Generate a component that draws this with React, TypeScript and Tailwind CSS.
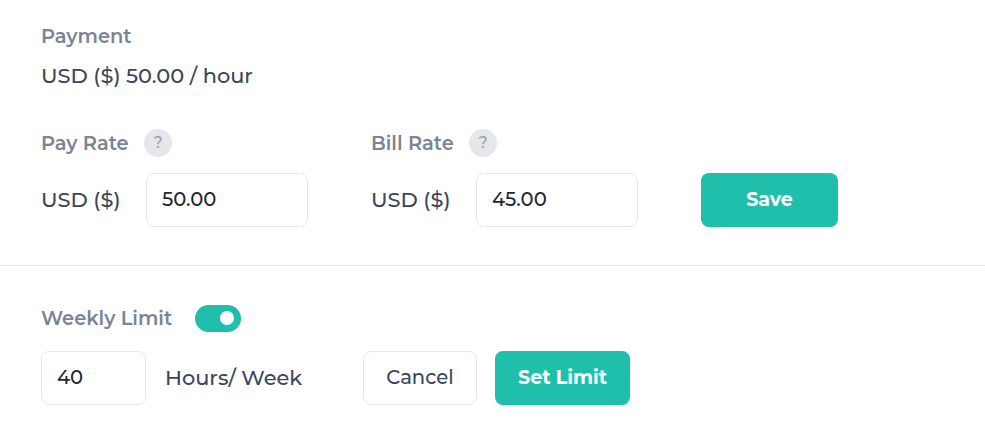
function Help() {
  return (
    <span className="flex h-7 w-7 items-center justify-center rounded-full bg-[#e5e7eb] text-base font-medium text-[#9ca3af]">
      ?
    </span>
  );
}

function RateField({ label, value, labelWidth }: { label: string; value: string; labelWidth: string }) {
  return (
    <div className="w-[330px]">
      <div className="flex h-7 items-center">
        <span className={`${labelWidth} pt-px text-[19.4px] font-semibold text-[#7b8494]`}>{label}</span>
        <Help />
      </div>
      <div className="mt-[16px] flex items-center">
        <span className="w-[105px] text-[20.9px] font-medium text-[#3b4659]">USD ($)</span>
        <div className="flex h-[54px] w-[162px] items-center rounded-lg border border-[#e5e7eb] bg-white px-[15px] text-[19.6px] font-medium text-[#1f2937]">
          {value}
        </div>
      </div>
    </div>
  );
}

export default function App() {
  return (
    <div className="h-[437px] w-[985px] overflow-hidden bg-white font-['Montserrat','Inter','Noto_Sans',sans-serif]">
      <div className="h-[266px] border-b border-[#e5e7eb] px-[41px] pt-[24px]">
        <div className="text-[19.4px] font-semibold leading-6 text-[#7b8494]">Payment</div>
        <div className="mt-[16px] text-[20.9px] font-medium leading-6 text-[#3b4659]">USD ($) 50.00 / hour</div>
        <div className="mt-[41px] flex items-end">
          <RateField label="Pay Rate" value="50.00" labelWidth="w-[103px]" />
          <RateField label="Bill Rate" value="45.00" labelWidth="w-[98px]" />
          <button className="h-[54px] w-[137px] rounded-lg bg-[#20bfac] text-[19px] font-bold text-white">Save</button>
        </div>
      </div>
      <div className="px-[41px] pt-[38px]">
        <div className="flex h-7 items-center">
          <span className="w-[154px] pt-px text-[19.4px] font-semibold text-[#7b8494]">Weekly Limit</span>
          <span className="flex h-[27px] w-[46px] items-center justify-end rounded-full bg-[#20bfac] pr-[7px]">
            <span className="h-[14px] w-[14px] rounded-full bg-white" />
          </span>
        </div>
        <div className="mt-[19px] flex items-center">
          <div className="flex h-[54px] w-[105px] items-center rounded-lg border border-[#e5e7eb] bg-white px-[15px] text-[19.6px] font-medium text-[#1f2937]">
            40
          </div>
          <span className="ml-[19px] w-[198px] text-[20.9px] font-medium text-[#3b4659]">Hours/ Week</span>
          <button className="h-[54px] w-[114px] rounded-lg border border-[#e5e7eb] bg-white text-[19.6px] font-medium text-[#3b4659]">Cancel</button>
          <button className="ml-[18px] h-[54px] w-[135px] rounded-lg bg-[#20bfac] text-[19px] font-bold text-white">Set Limit</button>
        </div>
      </div>
    </div>
  );
}
